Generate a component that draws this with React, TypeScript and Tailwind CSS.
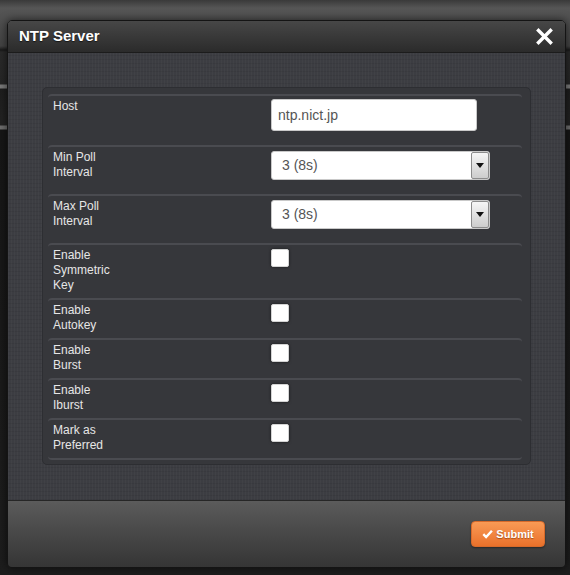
import React from "react";

type Row = {
  label: string[];
  h: string;
  kind: "input" | "select" | "check";
  value?: string;
  last?: boolean;
};

const rows: Row[] = [
  { label: ["Host"], h: "h-[51px]", kind: "input", value: "ntp.nict.jp" },
  { label: ["Min Poll", "Interval"], h: "h-[49px]", kind: "select", value: "3 (8s)" },
  { label: ["Max Poll", "Interval"], h: "h-[49px]", kind: "select", value: "3 (8s)" },
  { label: ["Enable", "Symmetric", "Key"], h: "h-[55px]", kind: "check" },
  { label: ["Enable", "Autokey"], h: "h-[40px]", kind: "check" },
  { label: ["Enable", "Burst"], h: "h-[40px]", kind: "check" },
  { label: ["Enable", "Iburst"], h: "h-[40px]", kind: "check" },
  { label: ["Mark as", "Preferred"], h: "h-[42px]", kind: "check", last: true },
];

function FakeSelect({ value }: { value: string }) {
  return (
    <div className="mt-px w-[219px] h-[29px] rounded-[3px] bg-white border border-[#c9c9c9] flex items-center justify-between">
      <span className="pl-[10px] text-[14px] text-[#555]">{value}</span>
      <div className="w-[18px] h-[27px] rounded-[2px] border border-[#8c8c8c] bg-gradient-to-b from-[#f6f6f6] to-[#cdcdcd] flex items-center justify-center">
        <svg width="8" height="5" viewBox="0 0 8 5">
          <path d="M0 0h8L4 5z" fill="#111" />
        </svg>
      </div>
    </div>
  );
}

export default function App() {
  return (
    <div className="min-h-[575px] w-full pt-[20px] px-[7px] pb-[7px] font-['Liberation_Sans',Arial,sans-serif] bg-[linear-gradient(to_bottom,#3a3a3a_0px,#565656_8px,#434343_46px,#1a1a1a_50px,#2a2a2a_52px,#262626_84px,#7a7a7a_85px,#7a7a7a_88px,#1e1e1e_89px,#232323_125px,#6e6e6e_126px,#6e6e6e_129px,#161616_130px,#1d1d1d_100%)]">
      <div className="w-[559px] rounded-[5px] border border-[#141414] overflow-hidden shadow-[0_0_8px_rgba(0,0,0,0.6)]">
        {/* Header */}
        <div className="h-[32px] flex items-center justify-between pl-[11px] pr-[12px] bg-gradient-to-b from-[#474747] to-[#2b2b2b] border-b border-[#1c1c1c]">
          <h3 className="text-[15px] font-bold text-white [text-shadow:0_1px_1px_rgba(0,0,0,0.6)]">NTP Server</h3>
          <svg width="17" height="17" viewBox="0 0 17 17">
            <path d="M2.5 2.5l12 12M14.5 2.5l-12 12" stroke="#fff" strokeWidth="3.4" strokeLinecap="square" />
          </svg>
        </div>

        {/* Body */}
        <div className="bg-[#3c3d42] bg-[image:repeating-linear-gradient(90deg,rgba(255,255,255,0.025)_0_1px,transparent_1px_3px),repeating-linear-gradient(0deg,rgba(0,0,0,0.06)_0_1px,transparent_1px_4px)] px-[34px] pt-[34px] pb-[35px]">
          <div className="rounded-[5px] bg-[#36373b] border border-[#2d2e32] pl-[5px] pr-[8px] pt-[6px] pb-[4px]">
            {rows.map((row, i) => (
              <div
                key={i}
                className={`${row.h} grid grid-cols-[218px_1fr] pl-[5px] pt-[3px] rounded-[4px] border-t-2 border-[#4a4b50] ${row.last ? "border-b-2" : ""}`}
              >
                <div className="text-[12px] leading-[15px] text-[#e6e6e6]">
                  {row.label.map((l, j) => (
                    <div key={j}>{l}</div>
                  ))}
                </div>
                <div>
                  {row.kind === "input" && (
                    <div className="w-[206px] h-[32px] rounded-[3px] bg-white border border-[#c9c9c9] px-[6px] flex items-center text-[14px] text-[#555]">
                      {row.value}
                    </div>
                  )}
                  {row.kind === "select" && <FakeSelect value={row.value!} />}
                  {row.kind === "check" && (
                    <div className="mt-px w-[18px] h-[18px] rounded-[2px] bg-white border border-[#d4d4d4] shadow-[0_0_3px_rgba(0,0,0,0.55)]" />
                  )}
                </div>
              </div>
            ))}
          </div>
        </div>

        {/* Footer */}
        <div className="h-[67px] flex items-center justify-end pr-[20px] bg-gradient-to-b from-[#5b5b5b] to-[#353535] border-t border-[#262626]">
          <button className="w-[74px] h-[26px] rounded-[4px] border border-[#d86a2a] bg-gradient-to-b from-[#f99a55] to-[#e9712a] flex items-center justify-center gap-[3px] text-white text-[11px] font-bold [text-shadow:0_1px_1px_rgba(120,50,0,0.6)] shadow-[0_1px_2px_rgba(0,0,0,0.4)]">
            <svg width="11" height="10" viewBox="0 0 11 10">
              <path d="M1.3 5.2l2.8 2.8 5.8-6.2" stroke="#fff" strokeWidth="2.4" fill="none" />
            </svg>
            Submit
          </button>
        </div>
      </div>
    </div>
  );
}
